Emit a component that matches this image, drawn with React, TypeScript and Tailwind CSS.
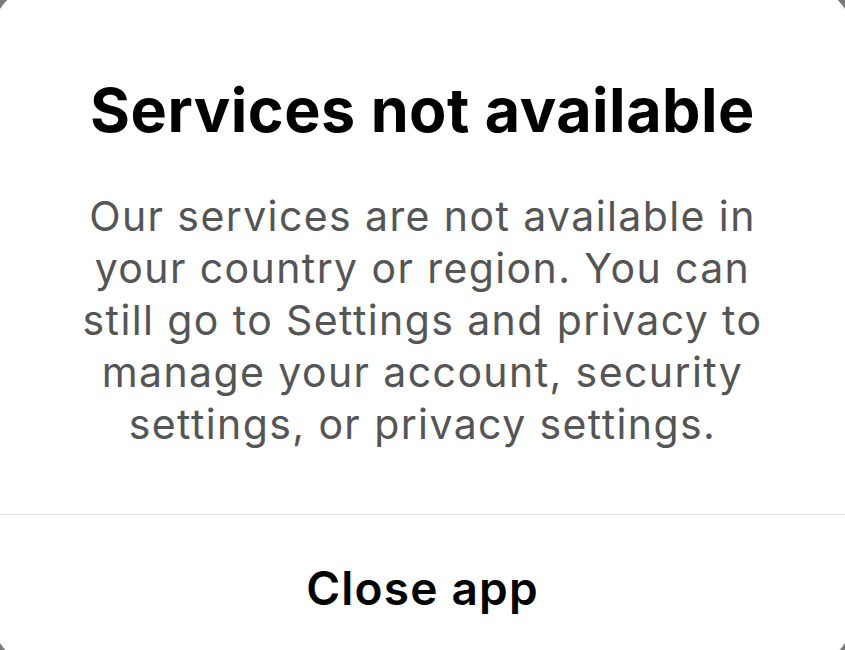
import React from 'react'

const lines = [
  'Our services are not available in',
  'your country or region. You can',
  'still go to Settings and privacy to',
  'manage your account, security',
  'settings, or privacy settings.',
]

export default function App() {
  return (
    <div className="h-[650px] w-[845px] overflow-hidden bg-[#7a7a7a] font-['Inter','Roboto',sans-serif]">
      <div className="-ml-[6px] -mt-[10px] flex h-[672px] w-[857px] flex-col rounded-[40px] bg-white">
        {/* Message */}
        <div className="flex flex-col items-center px-6 pt-[84px] text-center">
          <h1 className="text-[61px] font-bold leading-[72px] tracking-[0.5px] text-black">
            Services not available
          </h1>
          <p className="mt-[44px] text-[41px] font-normal leading-[52px] tracking-[1.4px] text-[#555555]">
            {lines.map((line, i) => (
              <React.Fragment key={i}>
                {line}
                {i < lines.length - 1 && <br />}
              </React.Fragment>
            ))}
          </p>
        </div>

        {/* Action */}
        <div className="mt-[64px] border-t border-[#dedede]">
          <button className="flex h-[146px] w-full items-center justify-center text-[46px] font-semibold tracking-[1.2px] text-black">
            Close app
          </button>
        </div>
      </div>
    </div>
  )
}
